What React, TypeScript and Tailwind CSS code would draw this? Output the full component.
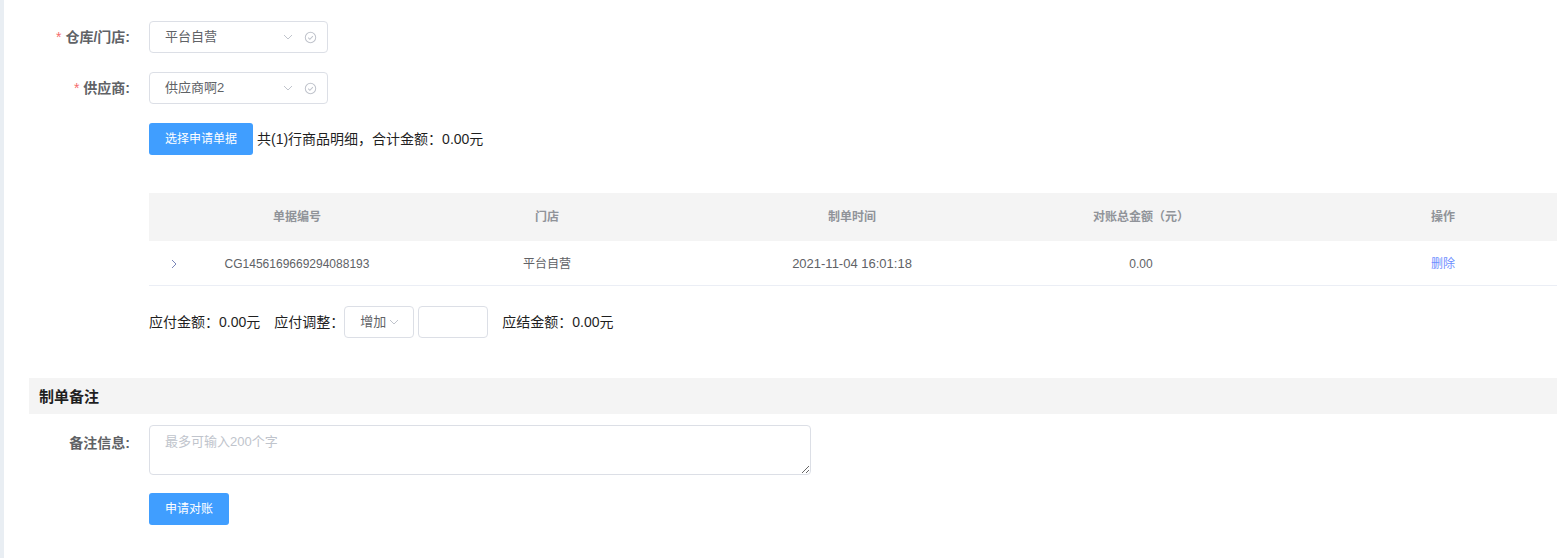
import React from "react";

const font = { fontFamily: '"Liberation Sans", "Noto Sans CJK SC", sans-serif' };

function Chevron({ className = "" }: { className?: string }) {
  return (
    <svg className={className} width="12" height="12" viewBox="0 0 12 12" fill="none">
      <path d="M2 4l4 4 4-4" stroke="#c0c4cc" strokeWidth="1" />
    </svg>
  );
}

function CheckCircle() {
  return (
    <svg width="13" height="13" viewBox="0 0 14 14" fill="none">
      <circle cx="7" cy="7" r="5.6" stroke="#c0c4cc" strokeWidth="1.1" />
      <path d="M4.5 7.2l1.8 1.7 3.3-3.4" stroke="#c0c4cc" strokeWidth="1.1" />
    </svg>
  );
}

function Select({ value }: { value: string }) {
  return (
    <div className="flex h-[32px] w-[179px] items-center rounded-[4px] border border-[#dcdfe6] bg-white pl-[15px] pr-[10px]">
      <span className="flex-1 text-[13px] text-[#606266]">{value}</span>
      <Chevron className="mr-[10px]" />
      <CheckCircle />
    </div>
  );
}

function Label({ text, required }: { text: string; required?: boolean }) {
  return (
    <div className="flex w-[149px] justify-end pr-[19px] text-[14px] font-bold text-[#606266]">
      {required && <span className="mr-[4px] font-normal text-[#f56c6c]">*</span>}
      <span>{text}</span>
    </div>
  );
}

export default function App() {
  return (
    <div className="flex min-h-[558px] w-[1557px] overflow-hidden bg-white" style={font}>
      <div className="w-[4px] shrink-0 bg-[#e9eef3]" />
      <div className="flex min-w-0 flex-1 flex-col">
        <div className="h-[21px]" />
        <div className="flex items-center">
          <div className="-ml-[4px] flex"><Label text="仓库/门店:" required /></div>
          <Select value="平台自营" />
        </div>
        <div className="flex items-center pt-[19px]">
          <div className="-ml-[4px] flex"><Label text="供应商:" required /></div>
          <Select value="供应商啊2" />
        </div>
        <div className="flex items-center pl-[145px] pt-[19px]">
          <button className="h-[32px] w-[104px] rounded-[3px] bg-[#409eff] text-[12px] text-white">选择申请单据</button>
          <span className="ml-[4px] text-[14px] text-[#1f1f1f]">共(1)行商品明细，合计金额：0.00元</span>
        </div>

        <div className="ml-[145px] mt-[38px] w-[1460px] text-[12px]">
          <div className="grid h-[48px] grid-cols-[50px_196px_304px_306px_272px_332px] items-center bg-[#f4f4f4] font-bold text-[#909399]">
            <div />
            <div className="text-center">单据编号</div>
            <div className="text-center">门店</div>
            <div className="text-center">制单时间</div>
            <div className="text-center">对账总金额（元）</div>
            <div className="text-center">操作</div>
          </div>
          <div className="grid h-[45px] grid-cols-[50px_196px_304px_306px_272px_332px] items-center border-b border-[#ebeef5] pt-[1px] text-[#606266]">
            <div className="flex justify-center">
              <svg width="10" height="10" viewBox="0 0 10 10" fill="none">
                <path d="M3 1l4 4-4 4" stroke="#7a86b8" strokeWidth="1" />
              </svg>
            </div>
            <div className="text-center">CG1456169669294088193</div>
            <div className="text-center">平台自营</div>
            <div className="text-center text-[13px]">2021-11-04 16:01:18</div>
            <div className="text-center">0.00</div>
            <div className="text-center text-[#6d8dff]">删除</div>
          </div>
        </div>

        <div className="flex items-center pl-[145px] pt-[20px] text-[14px] text-[#1f1f1f]">
          <span>应付金额：0.00元</span>
          <span className="ml-[14px]">应付调整：</span>
          <div className="flex h-[32px] w-[70px] items-center rounded-[4px] border border-[#dcdfe6] pl-[15px]">
            <span className="text-[13px] text-[#606266]">增加</span>
            <Chevron className="ml-[2px]" />
          </div>
          <div className="ml-[4px] h-[32px] w-[70px] rounded-[4px] border border-[#dcdfe6]" />
          <span className="ml-[14px]">应结金额：0.00元</span>
        </div>

        <div className="ml-[25px] mt-[40px] flex h-[36px] items-center bg-[#f4f4f4] pl-[10px] pt-[2px] text-[15px] font-bold text-[#1f1f1f]">
          制单备注
        </div>

        <div className="flex items-start pt-[11px]">
          <div className="-ml-[4px] flex pt-[8px]"><Label text="备注信息:" /></div>
          <textarea
            className="h-[50px] w-[662px] resize-y rounded-[4px] border border-[#dcdfe6] px-[15px] py-[6px] text-[13px] text-[#606266] outline-none placeholder:text-[#c0c4cc]"
            placeholder="最多可输入200个字"
            style={font}
          />
        </div>

        <div className="pl-[145px] pt-[18px]">
          <button className="h-[32px] w-[80px] rounded-[3px] bg-[#409eff] text-[12px] text-white">申请对账</button>
        </div>
      </div>
    </div>
  );
}
